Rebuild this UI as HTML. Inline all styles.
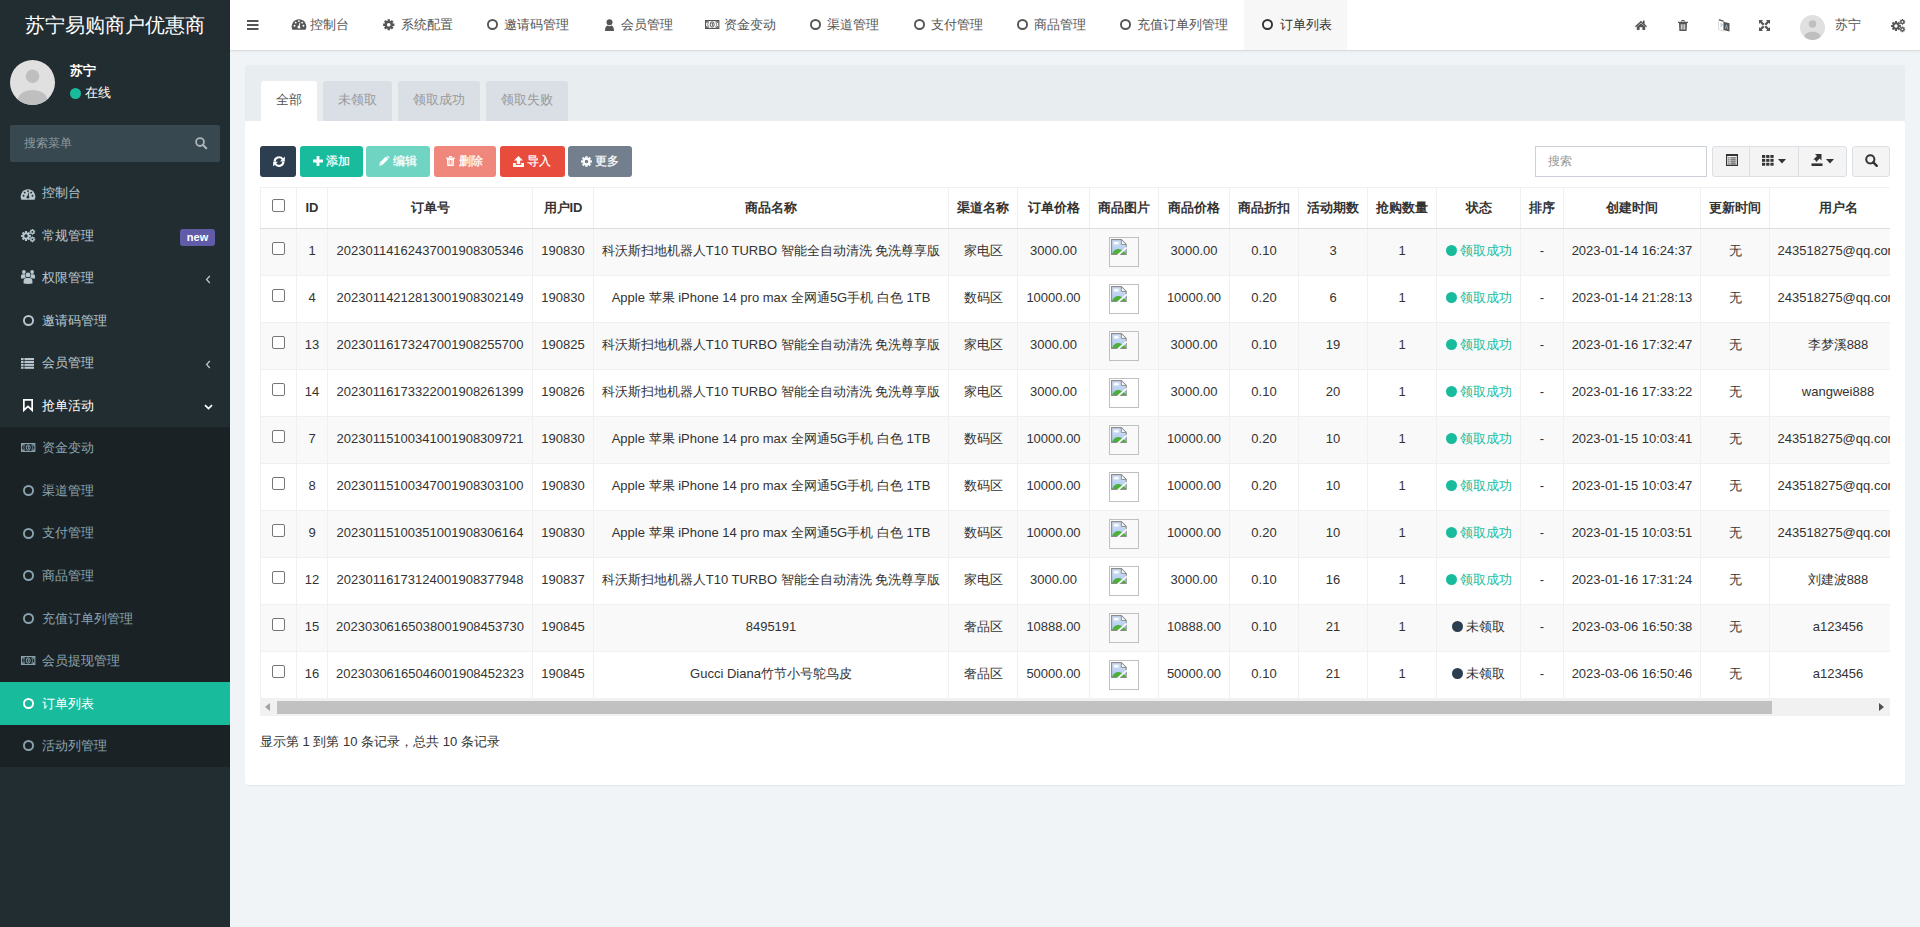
<!DOCTYPE html>
<html><head><meta charset="utf-8">
<style>
*{box-sizing:border-box;margin:0;padding:0}
html,body{width:1920px;height:927px;overflow:hidden}
body{font-family:"Liberation Sans",sans-serif;font-size:13px;color:#333;background:#f1f4f6;position:relative}
.abs{position:absolute}
svg{display:block;overflow:visible}
#side{position:absolute;left:0;top:0;width:230px;height:927px;background:#222d32}
#logo{position:absolute;left:0;top:0;width:230px;height:50px;color:#fff;font-size:20px;line-height:50px;text-align:center}
.avatar{position:absolute;left:10px;top:60px;width:45px;height:45px;border-radius:50%;background:#e0e0e0;overflow:hidden}
.uname{position:absolute;left:70px;top:62px;color:#fff;font-weight:bold;font-size:13px;line-height:18px}
.ustat{position:absolute;left:70px;top:85px;color:#fff;font-size:13px;line-height:16px}
.sform{position:absolute;left:10px;top:125px;width:210px;height:37px;background:#374850;border-radius:2px}
.sform span{position:absolute;left:14px;top:10.5px;color:#8c9ba3;line-height:15px;font-size:12px}
.menu{position:absolute;left:0;top:171.6px;width:230px}
.mi{position:relative;height:42.57px;color:#b8c7ce;line-height:15px}
.mi .t{position:absolute;left:42px;top:13.4px}
.sub{background:#1a2226}
.sub .mi{color:#8aa4af}
.mi.act{background:#18bc9c;color:#fff}
.mi.open{color:#fff}
.badge{position:absolute;left:180px;top:15px;height:17px;width:35px;border-radius:3px;background:#605ca8;color:#fff;font-weight:bold;font-size:11px;line-height:17px;text-align:center}
#hdr{position:absolute;left:230px;top:0;width:1690px;height:50px;background:#fff;box-shadow:0 1px 1px rgba(0,0,0,.07),0 2px 4px rgba(0,0,0,.03)}
.nv{position:absolute;top:17px;color:#555;line-height:15px;white-space:nowrap}
.panel{position:absolute;left:245px;top:65px;width:1660px;height:720px;background:#fff;border-radius:3px;box-shadow:0 1px 1px rgba(0,0,0,.05)}
.phead{position:absolute;left:0;top:0;width:1660px;height:56px;background:#e8edf0;border-radius:2px 2px 0 0}
.tab{position:absolute;top:16px;height:40px;background:#d9dfe5;color:#999;border-radius:3px 3px 0 0;line-height:15px;padding-top:10.5px;text-align:center}
.tab.on{background:#fff;color:#555}
.btn{position:absolute;top:81px;height:31px;border-radius:3px;color:#fff;font-size:12px;line-height:15px}
.btn .t{position:absolute;top:7.5px;-webkit-text-stroke:0.25px #fff}
.tblwrap{position:absolute;left:15px;top:122px;width:1630px;height:511px;overflow:hidden}
table{border-collapse:collapse;table-layout:fixed;position:absolute;left:0;top:0}
td,th{border:1px solid #f0f0f0;text-align:center;white-space:nowrap;overflow:hidden;font-size:13px;line-height:15px;padding:0}
th{height:41px;font-weight:bold;border-bottom:1px solid #dcdcdc}
td{height:47px;padding-bottom:4px}
th{padding-bottom:2px}
td .cb{position:relative;top:-3px}
th .cb{position:relative;top:-3px}
tr.s td{background:#f9f9f9}
.cb{display:inline-block;width:13px;height:13px;border:1px solid #767676;border-radius:2px;background:#fff;vertical-align:middle}
.img{display:inline-block;width:30px;height:30px;border:1px solid #c0c0c0;position:relative;vertical-align:middle;top:2px}
.ok{color:#18bc9c}
.dot{display:inline-block;width:11px;height:11px;border-radius:50%;vertical-align:-1px;margin-right:3px}
</style></head><body>

<div id="side">
<div id="logo">苏宁易购商户优惠商</div>
<div class="avatar"><svg width="45" height="45" viewBox="0 0 45 45"><circle cx="22.5" cy="16.3" r="6.8" fill="#bfbfbf"/><ellipse cx="22.5" cy="39" rx="14.5" ry="9" fill="#bfbfbf"/></svg></div>
<div class="uname">苏宁</div>
<div class="ustat"><span style="display:inline-block;width:11px;height:11px;border-radius:50%;background:#18bc9c;vertical-align:-2px;margin-right:4px"></span>在线</div>
<div class="sform"><span>搜索菜单</span><svg class="abs" style="left:185px;top:12px" width="12" height="12" viewBox="0 0 12 12"><circle cx="5.04" cy="5.04" r="3.96" fill="none" stroke="#a9b3b8" stroke-width="1.8"/><path d="M7.811999999999999 7.811999999999999 L11.2 11.2" stroke="#a9b3b8" stroke-width="2.2" stroke-linecap="round"/></svg></div>
<div class="menu">
<div class="mi"><svg class="abs" style="left:21px;top:17px" width="14" height="11" viewBox="0 0 14 11"><path fill="#b8c7ce" d="M0.4 10.7 A7.3 7.3 0 1 1 13.6 10.7 Z"/><circle cx="2.55" cy="6.7" r="0.95" fill="#222d32"/><circle cx="3.7" cy="3.6" r="0.95" fill="#222d32"/><circle cx="6.9" cy="2.1" r="0.95" fill="#222d32"/><circle cx="10.15" cy="3.6" r="0.95" fill="#222d32"/><circle cx="11.45" cy="6.7" r="0.95" fill="#222d32"/><path d="M6.3 8 L7.6 3.6 L8.3 3.8 L7.5 8.3Z" fill="#222d32"/><circle cx="6.9" cy="8.2" r="1.35" fill="#222d32"/></svg><span class="t">控制台</span></div>
<div class="mi"><svg class="abs" style="left:21px;top:15px" width="14" height="13" viewBox="0 0 14 13"><path fill="#b8c7ce" fill-rule="evenodd" d="M4.01 3.43 L3.93 2.12 L6.07 2.12 L5.99 3.43 L6.82 3.78 L7.70 2.79 L9.21 4.30 L8.22 5.18 L8.57 6.01 L9.88 5.93 L9.88 8.07 L8.57 7.99 L8.22 8.82 L9.21 9.70 L7.70 11.21 L6.82 10.22 L5.99 10.57 L6.07 11.88 L3.93 11.88 L4.01 10.57 L3.18 10.22 L2.30 11.21 L0.79 9.70 L1.78 8.82 L1.43 7.99 L0.12 8.07 L0.12 5.93 L1.43 6.01 L1.78 5.18 L0.79 4.30 L2.30 2.79 L3.18 3.78Z M3.30 7.00 a1.7 1.7 0 1 0 3.40 0 a1.7 1.7 0 1 0 -3.40 0Z"/><path fill="#b8c7ce" fill-rule="evenodd" d="M10.84 0.88 L10.78 0.07 L12.02 0.07 L11.96 0.88 L12.44 1.07 L12.96 0.46 L13.84 1.34 L13.23 1.86 L13.42 2.34 L14.23 2.28 L14.23 3.52 L13.42 3.46 L13.23 3.94 L13.84 4.46 L12.96 5.34 L12.44 4.73 L11.96 4.92 L12.02 5.73 L10.78 5.73 L10.84 4.92 L10.36 4.73 L9.84 5.34 L8.96 4.46 L9.57 3.94 L9.38 3.46 L8.57 3.52 L8.57 2.28 L9.38 2.34 L9.57 1.86 L8.96 1.34 L9.84 0.46 L10.36 1.07Z M10.50 2.90 a0.9 0.9 0 1 0 1.80 0 a0.9 0.9 0 1 0 -1.80 0Z"/><path fill="#b8c7ce" fill-rule="evenodd" d="M10.84 8.28 L10.78 7.47 L12.02 7.47 L11.96 8.28 L12.44 8.47 L12.96 7.86 L13.84 8.74 L13.23 9.26 L13.42 9.74 L14.23 9.68 L14.23 10.92 L13.42 10.86 L13.23 11.34 L13.84 11.86 L12.96 12.74 L12.44 12.13 L11.96 12.32 L12.02 13.13 L10.78 13.13 L10.84 12.32 L10.36 12.13 L9.84 12.74 L8.96 11.86 L9.57 11.34 L9.38 10.86 L8.57 10.92 L8.57 9.68 L9.38 9.74 L9.57 9.26 L8.96 8.74 L9.84 7.86 L10.36 8.47Z M10.50 10.30 a0.9 0.9 0 1 0 1.80 0 a0.9 0.9 0 1 0 -1.80 0Z"/></svg><span class="t">常规管理</span><div class="badge">new</div></div>
<div class="mi"><svg class="abs" style="left:21px;top:13.5px" width="14" height="14" viewBox="0 0 14 14"><circle cx="2.9" cy="2.0" r="1.9" fill="#b8c7ce"/><circle cx="11.1" cy="2.0" r="1.9" fill="#b8c7ce"/><path d="M0 8.6 L0 6 Q0 4.3 1.6 4.3 L4.2 4.3 Q5.6 4.3 5.6 6 L5.6 8.6Z" fill="#b8c7ce"/><path d="M14 8.6 L14 6 Q14 4.3 12.4 4.3 L9.8 4.3 Q8.4 4.3 8.4 6 L8.4 8.6Z" fill="#b8c7ce"/><circle cx="7" cy="4.9" r="2.9" fill="#222d32"/><circle cx="7" cy="4.9" r="2.4" fill="#b8c7ce"/><path d="M2.0 14 L2.0 11 Q2.0 7.4 5 7.4 L9 7.4 Q12 7.4 12 11 L12 14Z" fill="#222d32"/><path d="M2.6 13.6 L2.6 11 Q2.6 8.0 5.2 8.0 L8.8 8.0 Q11.4 8.0 11.4 11 L11.4 13.6 Q7 14.2 2.6 13.6Z" fill="#b8c7ce"/></svg><span class="t">权限管理</span><svg class="abs" style="left:205px;top:18px" width="6" height="9" viewBox="0 0 6 9"><path d="M4.8 1 L1.6 4.5 L4.8 8" fill="none" stroke="#b8c7ce" stroke-width="1.3"/></svg></div>
<div class="mi"><svg class="abs" style="left:22.5px;top:15.5px" width="11" height="11" viewBox="0 0 11 11"><circle cx="5.5" cy="5.5" r="4.55" fill="none" stroke="#b8c7ce" stroke-width="1.9"/></svg><span class="t">邀请码管理</span></div>
<div class="mi"><svg class="abs" style="left:21px;top:16px" width="13" height="11" viewBox="0 0 13 11"><rect x="0" y="0.0" width="2.6" height="2.1" fill="#b8c7ce"/><rect x="3.4" y="0.0" width="9.6" height="2.1" fill="#b8c7ce"/><rect x="0" y="2.9" width="2.6" height="2.1" fill="#b8c7ce"/><rect x="3.4" y="2.9" width="9.6" height="2.1" fill="#b8c7ce"/><rect x="0" y="5.8" width="2.6" height="2.1" fill="#b8c7ce"/><rect x="3.4" y="5.8" width="9.6" height="2.1" fill="#b8c7ce"/><rect x="0" y="8.7" width="2.6" height="2.1" fill="#b8c7ce"/><rect x="3.4" y="8.7" width="9.6" height="2.1" fill="#b8c7ce"/></svg><span class="t">会员管理</span><svg class="abs" style="left:205px;top:18px" width="6" height="9" viewBox="0 0 6 9"><path d="M4.8 1 L1.6 4.5 L4.8 8" fill="none" stroke="#b8c7ce" stroke-width="1.3"/></svg></div>
<div class="mi open"><svg class="abs" style="left:22.5px;top:14.5px" width="10" height="12" viewBox="0 0 10 12"><path d="M0.85 0.85 L9.15 0.85 L9.15 11.2 L5 7.4 L0.85 11.2Z" fill="none" stroke="#fff" stroke-width="1.7" stroke-linejoin="miter"/></svg><span class="t">抢单活动</span><svg class="abs" style="left:203.5px;top:20px" width="9" height="6" viewBox="0 0 9 6"><path d="M1 1.2 L4.5 4.6 L8 1.2" fill="none" stroke="#fff" stroke-width="1.7"/></svg></div>
<div class="sub">
<div class="mi"><svg class="abs" style="left:20.7px;top:15.8px" width="14.4" height="9" viewBox="0 0 14.4 9"><rect x="0" y="0" width="14.4" height="9" fill="#8aa4af"/><rect x="1.1" y="1.1" width="12.2" height="6.8" fill="#1a2226"/><path d="M1.1 1.1 L3.6 1.1 Q2.3 2.6 2.2 3.0 L1.1 3.0Z M1.1 7.9 L3.6 7.9 Q2.3 6.4 2.2 6.0 L1.1 6.0Z" fill="#8aa4af" opacity="0.8"/><path d="M13.3 1.1 L10.8 1.1 Q12.1 2.6 12.2 3.0 L13.3 3.0Z M13.3 7.9 L10.8 7.9 Q12.1 6.4 12.2 6.0 L13.3 6.0Z" fill="#8aa4af" opacity="0.8"/><path d="M3.6 1.3 Q1.9 4.5 3.6 7.7" fill="none" stroke="#8aa4af" stroke-width="0.9" opacity="0.8"/><path d="M10.8 1.3 Q12.5 4.5 10.8 7.7" fill="none" stroke="#8aa4af" stroke-width="0.9" opacity="0.8"/><ellipse cx="7.2" cy="4.5" rx="2.0" ry="2.7" fill="none" stroke="#8aa4af" stroke-width="1.0"/><path d="M6.6 3.3 L7.4 3.0 L7.4 6.2" fill="none" stroke="#8aa4af" stroke-width="0.9"/></svg><span class="t">资金变动</span></div>
<div class="mi"><svg class="abs" style="left:22.5px;top:15.5px" width="11" height="11" viewBox="0 0 11 11"><circle cx="5.5" cy="5.5" r="4.55" fill="none" stroke="#8aa4af" stroke-width="1.9"/></svg><span class="t">渠道管理</span></div>
<div class="mi"><svg class="abs" style="left:22.5px;top:15.5px" width="11" height="11" viewBox="0 0 11 11"><circle cx="5.5" cy="5.5" r="4.55" fill="none" stroke="#8aa4af" stroke-width="1.9"/></svg><span class="t">支付管理</span></div>
<div class="mi"><svg class="abs" style="left:22.5px;top:15.5px" width="11" height="11" viewBox="0 0 11 11"><circle cx="5.5" cy="5.5" r="4.55" fill="none" stroke="#8aa4af" stroke-width="1.9"/></svg><span class="t">商品管理</span></div>
<div class="mi"><svg class="abs" style="left:22.5px;top:15.5px" width="11" height="11" viewBox="0 0 11 11"><circle cx="5.5" cy="5.5" r="4.55" fill="none" stroke="#8aa4af" stroke-width="1.9"/></svg><span class="t">充值订单列管理</span></div>
<div class="mi"><svg class="abs" style="left:20.7px;top:15.8px" width="14.4" height="9" viewBox="0 0 14.4 9"><rect x="0" y="0" width="14.4" height="9" fill="#8aa4af"/><rect x="1.1" y="1.1" width="12.2" height="6.8" fill="#1a2226"/><path d="M1.1 1.1 L3.6 1.1 Q2.3 2.6 2.2 3.0 L1.1 3.0Z M1.1 7.9 L3.6 7.9 Q2.3 6.4 2.2 6.0 L1.1 6.0Z" fill="#8aa4af" opacity="0.8"/><path d="M13.3 1.1 L10.8 1.1 Q12.1 2.6 12.2 3.0 L13.3 3.0Z M13.3 7.9 L10.8 7.9 Q12.1 6.4 12.2 6.0 L13.3 6.0Z" fill="#8aa4af" opacity="0.8"/><path d="M3.6 1.3 Q1.9 4.5 3.6 7.7" fill="none" stroke="#8aa4af" stroke-width="0.9" opacity="0.8"/><path d="M10.8 1.3 Q12.5 4.5 10.8 7.7" fill="none" stroke="#8aa4af" stroke-width="0.9" opacity="0.8"/><ellipse cx="7.2" cy="4.5" rx="2.0" ry="2.7" fill="none" stroke="#8aa4af" stroke-width="1.0"/><path d="M6.6 3.3 L7.4 3.0 L7.4 6.2" fill="none" stroke="#8aa4af" stroke-width="0.9"/></svg><span class="t">会员提现管理</span></div>
<div class="mi act"><svg class="abs" style="left:22.5px;top:15.5px" width="11" height="11" viewBox="0 0 11 11"><circle cx="5.5" cy="5.5" r="4.55" fill="none" stroke="#fff" stroke-width="1.9"/></svg><span class="t">订单列表</span></div>
<div class="mi"><svg class="abs" style="left:22.5px;top:15.5px" width="11" height="11" viewBox="0 0 11 11"><circle cx="5.5" cy="5.5" r="4.55" fill="none" stroke="#8aa4af" stroke-width="1.9"/></svg><span class="t">活动列管理</span></div>
</div></div></div>
<div id="hdr">
<div class="abs" style="left:1014px;top:0;width:103px;height:50px;background:#f7f7f7"></div>
<svg class="abs" style="left:17px;top:20px" width="12" height="10" viewBox="0 0 12 10"><rect x="0" y="0" width="11.5" height="2" fill="#555"/><rect x="0" y="4" width="11.5" height="2" fill="#555"/><rect x="0" y="8" width="11.5" height="2" fill="#555"/></svg>
<svg class="abs" style="left:62px;top:19px" width="14" height="11" viewBox="0 0 14 11"><path fill="#555" d="M0.4 10.7 A7.3 7.3 0 1 1 13.6 10.7 Z"/><circle cx="2.55" cy="6.7" r="0.95" fill="#fff"/><circle cx="3.7" cy="3.6" r="0.95" fill="#fff"/><circle cx="6.9" cy="2.1" r="0.95" fill="#fff"/><circle cx="10.15" cy="3.6" r="0.95" fill="#fff"/><circle cx="11.45" cy="6.7" r="0.95" fill="#fff"/><path d="M6.3 8 L7.6 3.6 L8.3 3.8 L7.5 8.3Z" fill="#fff"/><circle cx="6.9" cy="8.2" r="1.35" fill="#fff"/></svg>
<div class="nv" style="left:80px;color:#555">控制台</div>
<svg class="abs" style="left:153px;top:18.5px" width="11.5" height="11.5" viewBox="0 0 11.5 11.5"><path fill="#555" fill-rule="evenodd" d="M4.62 1.65 L4.52 0.13 L6.98 0.13 L6.88 1.65 L7.85 2.05 L8.85 0.91 L10.59 2.65 L9.45 3.65 L9.85 4.62 L11.37 4.52 L11.37 6.98 L9.85 6.88 L9.45 7.85 L10.59 8.85 L8.85 10.59 L7.85 9.45 L6.88 9.85 L6.98 11.37 L4.52 11.37 L4.62 9.85 L3.65 9.45 L2.65 10.59 L0.91 8.85 L2.05 7.85 L1.65 6.88 L0.13 6.98 L0.13 4.52 L1.65 4.62 L2.05 3.65 L0.91 2.65 L2.65 0.91 L3.65 2.05Z M3.91 5.75 a1.84 1.84 0 1 0 3.68 0 a1.84 1.84 0 1 0 -3.68 0Z"/></svg>
<div class="nv" style="left:171px;color:#555">系统配置</div>
<svg class="abs" style="left:256.5px;top:18.5px" width="11" height="11" viewBox="0 0 11 11"><circle cx="5.5" cy="5.5" r="4.55" fill="none" stroke="#555" stroke-width="1.9"/></svg>
<div class="nv" style="left:274px;color:#555">邀请码管理</div>
<svg class="abs" style="left:374.5px;top:18.5px" width="9" height="12" viewBox="0 0 9 12"><circle cx="4.5" cy="3.2" r="3" fill="#555"/><path d="M0 12 C0 8.5 1.2 6.8 2.6 6.6 Q4.5 7.8 6.4 6.6 C7.8 6.8 9 8.5 9 12Z" fill="#555"/></svg>
<div class="nv" style="left:391px;color:#555">会员管理</div>
<svg class="abs" style="left:475px;top:19.5px" width="14.4" height="9" viewBox="0 0 14.4 9"><rect x="0" y="0" width="14.4" height="9" fill="#555"/><rect x="1.1" y="1.1" width="12.2" height="6.8" fill="#fff"/><path d="M1.1 1.1 L3.6 1.1 Q2.3 2.6 2.2 3.0 L1.1 3.0Z M1.1 7.9 L3.6 7.9 Q2.3 6.4 2.2 6.0 L1.1 6.0Z" fill="#555" opacity="0.8"/><path d="M13.3 1.1 L10.8 1.1 Q12.1 2.6 12.2 3.0 L13.3 3.0Z M13.3 7.9 L10.8 7.9 Q12.1 6.4 12.2 6.0 L13.3 6.0Z" fill="#555" opacity="0.8"/><path d="M3.6 1.3 Q1.9 4.5 3.6 7.7" fill="none" stroke="#555" stroke-width="0.9" opacity="0.8"/><path d="M10.8 1.3 Q12.5 4.5 10.8 7.7" fill="none" stroke="#555" stroke-width="0.9" opacity="0.8"/><ellipse cx="7.2" cy="4.5" rx="2.0" ry="2.7" fill="none" stroke="#555" stroke-width="1.0"/><path d="M6.6 3.3 L7.4 3.0 L7.4 6.2" fill="none" stroke="#555" stroke-width="0.9"/></svg>
<div class="nv" style="left:494px;color:#555">资金变动</div>
<svg class="abs" style="left:579.5px;top:18.5px" width="11" height="11" viewBox="0 0 11 11"><circle cx="5.5" cy="5.5" r="4.55" fill="none" stroke="#555" stroke-width="1.9"/></svg>
<div class="nv" style="left:597px;color:#555">渠道管理</div>
<svg class="abs" style="left:683.5px;top:18.5px" width="11" height="11" viewBox="0 0 11 11"><circle cx="5.5" cy="5.5" r="4.55" fill="none" stroke="#555" stroke-width="1.9"/></svg>
<div class="nv" style="left:701px;color:#555">支付管理</div>
<svg class="abs" style="left:786.5px;top:18.5px" width="11" height="11" viewBox="0 0 11 11"><circle cx="5.5" cy="5.5" r="4.55" fill="none" stroke="#555" stroke-width="1.9"/></svg>
<div class="nv" style="left:804px;color:#555">商品管理</div>
<svg class="abs" style="left:889.5px;top:18.5px" width="11" height="11" viewBox="0 0 11 11"><circle cx="5.5" cy="5.5" r="4.55" fill="none" stroke="#555" stroke-width="1.9"/></svg>
<div class="nv" style="left:907px;color:#555">充值订单列管理</div>
<svg class="abs" style="left:1032.0px;top:18.5px" width="11" height="11" viewBox="0 0 11 11"><circle cx="5.5" cy="5.5" r="4.55" fill="none" stroke="#333" stroke-width="1.9"/></svg>
<div class="nv" style="left:1049.5px;color:#333">订单列表</div>
<svg class="abs" style="left:1405px;top:20px" width="12" height="10" viewBox="0 0 12 10"><path d="M6 0.8 L0 6.2 L1 7.2 L6 2.8 L11 7.2 L12 6.2 L9.6 4 L9.6 0.6 L8 0.6 L8 2.6Z" fill="#555"/><path d="M1.8 6.8 L6 3.2 L10.2 6.8 L10.2 10 L7.4 10 L7.4 7.2 L4.6 7.2 L4.6 10 L1.8 10Z" fill="#555"/></svg>
<svg class="abs" style="left:1448px;top:20px" width="10" height="11" viewBox="0 0 10 11"><path d="M0 1.8 L10 1.8 L10 3 L0 3Z" fill="#555"/><path d="M3.2 1.8 L3.6 0 L6.4 0 L6.8 1.8 L5.9 1.8 L5.7 0.9 L4.3 0.9 L4.1 1.8Z" fill="#555"/><path d="M1 3 L9 3 L8.6 11 L1.4 11Z" fill="#555"/><rect x="2.8" y="4.2" width="0.9" height="5.4" fill="#fff"/><rect x="4.55" y="4.2" width="0.9" height="5.4" fill="#fff"/><rect x="6.3" y="4.2" width="0.9" height="5.4" fill="#fff"/></svg>
<svg class="abs" style="left:1487.5px;top:19px" width="12" height="13" viewBox="0 0 12 13"><path d="M0.5 1.5 L6 3 L6 12 L0.5 10.5Z" fill="none" stroke="#cfd3d8" stroke-width="0.8"/><path d="M2 5 L4.5 5 M3.2 4 L3.2 8 M2 8 Q4 7 4.8 5" stroke="#b9c2cc" stroke-width="0.7" fill="none"/><path d="M5.5 2.8 L11.5 4.2 L11.5 12.6 L5.5 11Z" fill="#555"/><path d="M1 0.6 L5.8 2.2" stroke="#555" stroke-width="1.2"/><path d="M7.4 9.8 L8.5 5.8 L9.6 10.2" stroke="#9fb6cc" stroke-width="0.9" fill="none"/></svg>
<svg class="abs" style="left:1529px;top:20px" width="11" height="11" viewBox="0 0 11 11"><path d="M0 0 L4 0 L2.8 1.2 L5.5 3.9 L3.9 5.5 L1.2 2.8 L0 4Z" fill="#555"/><path d="M11 0 L7 0 L8.2 1.2 L5.5 3.9 L7.1 5.5 L9.8 2.8 L11 4Z" fill="#555"/><path d="M0 11 L4 11 L2.8 9.8 L5.5 7.1 L3.9 5.5 L1.2 8.2 L0 7Z" fill="#555"/><path d="M11 11 L7 11 L8.2 9.8 L5.5 7.1 L7.1 5.5 L9.8 8.2 L11 7Z" fill="#555"/></svg>
<div class="abs" style="left:1570px;top:15px;width:25px;height:25px;border-radius:50%;background:#e0e0e0;overflow:hidden"><svg width="25" height="25" viewBox="0 0 45 45"><circle cx="22.5" cy="16.3" r="6.8" fill="#bfbfbf"/><ellipse cx="22.5" cy="39" rx="14.5" ry="9" fill="#bfbfbf"/></svg></div>
<div class="nv" style="left:1605px">苏宁</div>
<svg class="abs" style="left:1661px;top:19px" width="14" height="13" viewBox="0 0 14 13"><path fill="#555" fill-rule="evenodd" d="M4.01 3.43 L3.93 2.12 L6.07 2.12 L5.99 3.43 L6.82 3.78 L7.70 2.79 L9.21 4.30 L8.22 5.18 L8.57 6.01 L9.88 5.93 L9.88 8.07 L8.57 7.99 L8.22 8.82 L9.21 9.70 L7.70 11.21 L6.82 10.22 L5.99 10.57 L6.07 11.88 L3.93 11.88 L4.01 10.57 L3.18 10.22 L2.30 11.21 L0.79 9.70 L1.78 8.82 L1.43 7.99 L0.12 8.07 L0.12 5.93 L1.43 6.01 L1.78 5.18 L0.79 4.30 L2.30 2.79 L3.18 3.78Z M3.30 7.00 a1.7 1.7 0 1 0 3.40 0 a1.7 1.7 0 1 0 -3.40 0Z"/><path fill="#555" fill-rule="evenodd" d="M10.84 0.88 L10.78 0.07 L12.02 0.07 L11.96 0.88 L12.44 1.07 L12.96 0.46 L13.84 1.34 L13.23 1.86 L13.42 2.34 L14.23 2.28 L14.23 3.52 L13.42 3.46 L13.23 3.94 L13.84 4.46 L12.96 5.34 L12.44 4.73 L11.96 4.92 L12.02 5.73 L10.78 5.73 L10.84 4.92 L10.36 4.73 L9.84 5.34 L8.96 4.46 L9.57 3.94 L9.38 3.46 L8.57 3.52 L8.57 2.28 L9.38 2.34 L9.57 1.86 L8.96 1.34 L9.84 0.46 L10.36 1.07Z M10.50 2.90 a0.9 0.9 0 1 0 1.80 0 a0.9 0.9 0 1 0 -1.80 0Z"/><path fill="#555" fill-rule="evenodd" d="M10.84 8.28 L10.78 7.47 L12.02 7.47 L11.96 8.28 L12.44 8.47 L12.96 7.86 L13.84 8.74 L13.23 9.26 L13.42 9.74 L14.23 9.68 L14.23 10.92 L13.42 10.86 L13.23 11.34 L13.84 11.86 L12.96 12.74 L12.44 12.13 L11.96 12.32 L12.02 13.13 L10.78 13.13 L10.84 12.32 L10.36 12.13 L9.84 12.74 L8.96 11.86 L9.57 11.34 L9.38 10.86 L8.57 10.92 L8.57 9.68 L9.38 9.74 L9.57 9.26 L8.96 8.74 L9.84 7.86 L10.36 8.47Z M10.50 10.30 a0.9 0.9 0 1 0 1.80 0 a0.9 0.9 0 1 0 -1.80 0Z"/></svg>
</div>
<div class="panel">
<div class="phead">
<div class="tab on" style="left:16px;width:56px">全部</div>
<div class="tab" style="left:78px;width:69px">未领取</div>
<div class="tab" style="left:153px;width:82px">领取成功</div>
<div class="tab" style="left:241px;width:82px">领取失败</div>
</div>
<div class="btn" style="left:15px;width:36px;background:#2c3e50"><svg class="abs" style="left:12.5px;top:10px" width="12" height="11" viewBox="0 0 12 11"><path d="M1.6 5.6 A4.4 4.4 0 0 1 9.6 3.2" fill="none" stroke="#fff" stroke-width="2.1"/><path d="M11.8 0.6 L11.8 5.4 L7.0 5.4Z" fill="#fff"/><path d="M10.4 5.6 A4.4 4.4 0 0 1 2.4 8.0" fill="none" stroke="#fff" stroke-width="2.1"/><path d="M0.2 10.6 L0.2 5.8 L5.0 5.8Z" fill="#fff"/></svg></div>
<div class="btn" style="left:55px;width:63px;background:#18bc9c"><svg class="abs" style="left:13px;top:10px" width="10" height="10" viewBox="0 0 10 10"><path d="M3.6 0 h2.8 v3.6 h3.6 v2.8 h-3.6 v3.6 h-2.8 v-3.6 h-3.6 v-2.8 h3.6Z" fill="#fff"/></svg><span class="t" style="left:26px">添加</span></div>
<div class="btn" style="left:121px;width:64px;background:#6fd4c1"><svg class="abs" style="left:12.5px;top:10px" width="10" height="10" viewBox="0 0 10 10"><path d="M0.2 9.8 L0.9 6.6 L6.9 0.6 L9.4 3.1 L3.4 9.1Z" fill="#fff"/><path d="M7.6 0 L8.4 -0.6 L10.6 1.6 L10.0 2.4Z" fill="#fff"/><path d="M1.3 7.2 L2.8 8.7" stroke="#6fd4c1" stroke-width="0.6"/></svg><span class="t" style="left:27px">编辑</span></div>
<div class="btn" style="left:189px;width:62px;background:#f0877c"><svg class="abs" style="left:12px;top:9.5px" width="9" height="10" viewBox="0 0 9 10"><path d="M0 1.6 L9 1.6 L9 2.8 L0 2.8Z" fill="#fff"/><path d="M2.8 1.6 L3.2 0 L5.8 0 L6.2 1.6Z" fill="#fff"/><path d="M0.9 2.8 L8.1 2.8 L7.7 10 L1.3 10Z" fill="#fff"/><rect x="2.6" y="3.9" width="0.8" height="4.8" fill="#f0877c"/><rect x="4.1" y="3.9" width="0.8" height="4.8" fill="#f0877c"/><rect x="5.6" y="3.9" width="0.8" height="4.8" fill="#f0877c"/></svg><span class="t" style="left:25px">删除</span></div>
<div class="btn" style="left:255px;width:65px;background:#e74c3c"><svg class="abs" style="left:12.5px;top:9.5px" width="11" height="11" viewBox="0 0 11 11"><path d="M5.5 0 L10 4.5 L7.2 4.5 L7.2 8 L3.8 8 L3.8 4.5 L1 4.5Z" fill="#fff"/><path d="M0 7 L2.8 7 L2.8 9 L8.2 9 L8.2 7 L11 7 L11 11 L0 11Z" fill="#fff"/></svg><span class="t" style="left:27px">导入</span></div>
<div class="btn" style="left:323px;width:64px;background:#737f8c"><svg class="abs" style="left:12.5px;top:9.5px" width="11" height="11" viewBox="0 0 11 11"><path fill="#fff" fill-rule="evenodd" d="M4.41 1.58 L4.32 0.13 L6.68 0.13 L6.59 1.58 L7.51 1.96 L8.47 0.87 L10.13 2.53 L9.04 3.49 L9.42 4.41 L10.87 4.32 L10.87 6.68 L9.42 6.59 L9.04 7.51 L10.13 8.47 L8.47 10.13 L7.51 9.04 L6.59 9.42 L6.68 10.87 L4.32 10.87 L4.41 9.42 L3.49 9.04 L2.53 10.13 L0.87 8.47 L1.96 7.51 L1.58 6.59 L0.13 6.68 L0.13 4.32 L1.58 4.41 L1.96 3.49 L0.87 2.53 L2.53 0.87 L3.49 1.96Z M3.74 5.50 a1.76 1.76 0 1 0 3.52 0 a1.76 1.76 0 1 0 -3.52 0Z"/></svg><span class="t" style="left:26.5px">更多</span></div>
<div class="abs" style="left:1290px;top:81px;width:172px;height:31px;border:1px solid #ccd1d9;background:#fff"><span class="abs" style="left:12px;top:7px;color:#999;line-height:15px;font-size:12px">搜索</span></div>
<div class="abs" style="left:1467px;top:81px;width:135px;height:31px;border:1px solid #dcdfe3;background:#f4f4f4;border-radius:3px"></div>
<div class="abs" style="left:1504px;top:82px;width:1px;height:29px;background:#dcdfe3"></div>
<div class="abs" style="left:1553px;top:82px;width:1px;height:29px;background:#dcdfe3"></div>
<div class="abs" style="left:1607px;top:81px;width:38px;height:31px;border:1px solid #dcdfe3;background:#f4f4f4;border-radius:3px"></div>
<svg class="abs" style="left:1481px;top:89px" width="12" height="12" viewBox="0 0 12 12"><rect x="0.6" y="0.6" width="10.8" height="10.8" fill="none" stroke="#333" stroke-width="1.2"/><rect x="0" y="0" width="12" height="2" fill="#333"/><rect x="2.2" y="3.4" width="1.4" height="1" fill="#333"/><rect x="4.4" y="3.4" width="5.4" height="1" fill="#333"/><rect x="2.2" y="5.4" width="1.4" height="1" fill="#333"/><rect x="4.4" y="5.4" width="5.4" height="1" fill="#333"/><rect x="2.2" y="7.4" width="1.4" height="1" fill="#333"/><rect x="4.4" y="7.4" width="5.4" height="1" fill="#333"/><rect x="2.2" y="9.4" width="1.4" height="1" fill="#333"/><rect x="4.4" y="9.4" width="5.4" height="1" fill="#333"/></svg>
<svg class="abs" style="left:1517px;top:90px" width="12" height="11" viewBox="0 0 12 11"><rect x="0.0" y="0.0" width="3.2" height="2.9" fill="#333"/><rect x="4.2" y="0.0" width="3.2" height="2.9" fill="#333"/><rect x="8.4" y="0.0" width="3.2" height="2.9" fill="#333"/><rect x="0.0" y="3.9" width="3.2" height="2.9" fill="#333"/><rect x="4.2" y="3.9" width="3.2" height="2.9" fill="#333"/><rect x="8.4" y="3.9" width="3.2" height="2.9" fill="#333"/><rect x="0.0" y="7.8" width="3.2" height="2.9" fill="#333"/><rect x="4.2" y="7.8" width="3.2" height="2.9" fill="#333"/><rect x="8.4" y="7.8" width="3.2" height="2.9" fill="#333"/></svg>
<svg class="abs" style="left:1533px;top:94px" width="8" height="5" viewBox="0 0 8 5"><path d="M0 0 L8 0 L4 4.5Z" fill="#333"/></svg>
<svg class="abs" style="left:1565.5px;top:89px" width="12" height="12" viewBox="0 0 12 12"><rect x="0.5" y="9.4" width="11" height="2.6" fill="#333"/><path d="M4 0 L10.5 0 L10.5 6.5 L8.6 4.6 L5 8.2 L2.4 5.6 L6 2 Z" fill="#333"/><path d="M2 6.4 L3.2 5.2 L5.2 7.2 L4.2 8.4Z" fill="#f4f4f4"/></svg>
<svg class="abs" style="left:1581px;top:94px" width="8" height="5" viewBox="0 0 8 5"><path d="M0 0 L8 0 L4 4.5Z" fill="#333"/></svg>
<svg class="abs" style="left:1620px;top:89px" width="13" height="13" viewBox="0 0 13 13"><circle cx="5.3" cy="5.3" r="4.1" fill="none" stroke="#333" stroke-width="2"/><path d="M8.3 8.3 L11.8 11.8" stroke="#333" stroke-width="2.4" stroke-linecap="round"/></svg>
</div>
<div class="tblwrap" style="left:260px;top:187px">
<table style="width:1646px"><colgroup><col style="width:36px"><col style="width:31px"><col style="width:205px"><col style="width:61px"><col style="width:355px"><col style="width:69px"><col style="width:72px"><col style="width:69px"><col style="width:71px"><col style="width:69px"><col style="width:69px"><col style="width:69px"><col style="width:84px"><col style="width:43px"><col style="width:137px"><col style="width:69px"><col style="width:137px"></colgroup>
<tr><th><span class=cb></span></th><th>ID</th><th>订单号</th><th>用户ID</th><th>商品名称</th><th>渠道名称</th><th>订单价格</th><th>商品图片</th><th>商品价格</th><th>商品折扣</th><th>活动期数</th><th>抢购数量</th><th>状态</th><th>排序</th><th>创建时间</th><th>更新时间</th><th>用户名</th></tr>
<tr class="s"><td><span class="cb"></span></td><td>1</td><td>20230114162437001908305346</td><td>190830</td><td>科沃斯扫地机器人T10 TURBO 智能全自动清洗 免洗尊享版</td><td>家电区</td><td>3000.00</td><td><span class="img"><svg class="abs" style="left:1px;top:1px" width="16" height="16" viewBox="0 0 16 16"><defs><linearGradient id="sky" x1="0" y1="0" x2="0" y2="1"><stop offset="0" stop-color="#d3e2f8"/><stop offset="1" stop-color="#aac6ee"/></linearGradient></defs><path d="M0.6 0.6 L10.3 0.6 L15.2 5.4 L15.2 15.4 L0.6 15.4Z" fill="url(#sky)" stroke="#8c8c8c" stroke-width="1.1"/><path d="M10.3 0.6 L10.3 5.4 L15.2 5.4Z" fill="#fff" stroke="#8c8c8c" stroke-width="1"/><ellipse cx="5.3" cy="4.4" rx="2.6" ry="1.1" fill="#fff"/><path d="M3.6 4 Q5.3 1.8 7 4Z" fill="#fff"/><path d="M1.1 15 Q3.5 9.5 8 10 Q12 10.6 14.7 14 L14.7 15Z" fill="#4caf39"/><path d="M6.8 16.2 L15.8 8.4" stroke="#f9f9f9" stroke-width="1.8"/></svg></span></td><td>3000.00</td><td>0.10</td><td>3</td><td>1</td><td><span class="ok"><span class="dot" style="background:#18bc9c"></span>领取成功</span></td><td>-</td><td>2023-01-14 16:24:37</td><td>无</td><td>243518275@qq.com</td></tr>
<tr><td><span class="cb"></span></td><td>4</td><td>20230114212813001908302149</td><td>190830</td><td>Apple 苹果 iPhone 14 pro max 全网通5G手机 白色 1TB</td><td>数码区</td><td>10000.00</td><td><span class="img"><svg class="abs" style="left:1px;top:1px" width="16" height="16" viewBox="0 0 16 16"><defs><linearGradient id="sky" x1="0" y1="0" x2="0" y2="1"><stop offset="0" stop-color="#d3e2f8"/><stop offset="1" stop-color="#aac6ee"/></linearGradient></defs><path d="M0.6 0.6 L10.3 0.6 L15.2 5.4 L15.2 15.4 L0.6 15.4Z" fill="url(#sky)" stroke="#8c8c8c" stroke-width="1.1"/><path d="M10.3 0.6 L10.3 5.4 L15.2 5.4Z" fill="#fff" stroke="#8c8c8c" stroke-width="1"/><ellipse cx="5.3" cy="4.4" rx="2.6" ry="1.1" fill="#fff"/><path d="M3.6 4 Q5.3 1.8 7 4Z" fill="#fff"/><path d="M1.1 15 Q3.5 9.5 8 10 Q12 10.6 14.7 14 L14.7 15Z" fill="#4caf39"/><path d="M6.8 16.2 L15.8 8.4" stroke="#f9f9f9" stroke-width="1.8"/></svg></span></td><td>10000.00</td><td>0.20</td><td>6</td><td>1</td><td><span class="ok"><span class="dot" style="background:#18bc9c"></span>领取成功</span></td><td>-</td><td>2023-01-14 21:28:13</td><td>无</td><td>243518275@qq.com</td></tr>
<tr class="s"><td><span class="cb"></span></td><td>13</td><td>20230116173247001908255700</td><td>190825</td><td>科沃斯扫地机器人T10 TURBO 智能全自动清洗 免洗尊享版</td><td>家电区</td><td>3000.00</td><td><span class="img"><svg class="abs" style="left:1px;top:1px" width="16" height="16" viewBox="0 0 16 16"><defs><linearGradient id="sky" x1="0" y1="0" x2="0" y2="1"><stop offset="0" stop-color="#d3e2f8"/><stop offset="1" stop-color="#aac6ee"/></linearGradient></defs><path d="M0.6 0.6 L10.3 0.6 L15.2 5.4 L15.2 15.4 L0.6 15.4Z" fill="url(#sky)" stroke="#8c8c8c" stroke-width="1.1"/><path d="M10.3 0.6 L10.3 5.4 L15.2 5.4Z" fill="#fff" stroke="#8c8c8c" stroke-width="1"/><ellipse cx="5.3" cy="4.4" rx="2.6" ry="1.1" fill="#fff"/><path d="M3.6 4 Q5.3 1.8 7 4Z" fill="#fff"/><path d="M1.1 15 Q3.5 9.5 8 10 Q12 10.6 14.7 14 L14.7 15Z" fill="#4caf39"/><path d="M6.8 16.2 L15.8 8.4" stroke="#f9f9f9" stroke-width="1.8"/></svg></span></td><td>3000.00</td><td>0.10</td><td>19</td><td>1</td><td><span class="ok"><span class="dot" style="background:#18bc9c"></span>领取成功</span></td><td>-</td><td>2023-01-16 17:32:47</td><td>无</td><td>李梦溪888</td></tr>
<tr><td><span class="cb"></span></td><td>14</td><td>20230116173322001908261399</td><td>190826</td><td>科沃斯扫地机器人T10 TURBO 智能全自动清洗 免洗尊享版</td><td>家电区</td><td>3000.00</td><td><span class="img"><svg class="abs" style="left:1px;top:1px" width="16" height="16" viewBox="0 0 16 16"><defs><linearGradient id="sky" x1="0" y1="0" x2="0" y2="1"><stop offset="0" stop-color="#d3e2f8"/><stop offset="1" stop-color="#aac6ee"/></linearGradient></defs><path d="M0.6 0.6 L10.3 0.6 L15.2 5.4 L15.2 15.4 L0.6 15.4Z" fill="url(#sky)" stroke="#8c8c8c" stroke-width="1.1"/><path d="M10.3 0.6 L10.3 5.4 L15.2 5.4Z" fill="#fff" stroke="#8c8c8c" stroke-width="1"/><ellipse cx="5.3" cy="4.4" rx="2.6" ry="1.1" fill="#fff"/><path d="M3.6 4 Q5.3 1.8 7 4Z" fill="#fff"/><path d="M1.1 15 Q3.5 9.5 8 10 Q12 10.6 14.7 14 L14.7 15Z" fill="#4caf39"/><path d="M6.8 16.2 L15.8 8.4" stroke="#f9f9f9" stroke-width="1.8"/></svg></span></td><td>3000.00</td><td>0.10</td><td>20</td><td>1</td><td><span class="ok"><span class="dot" style="background:#18bc9c"></span>领取成功</span></td><td>-</td><td>2023-01-16 17:33:22</td><td>无</td><td>wangwei888</td></tr>
<tr class="s"><td><span class="cb"></span></td><td>7</td><td>20230115100341001908309721</td><td>190830</td><td>Apple 苹果 iPhone 14 pro max 全网通5G手机 白色 1TB</td><td>数码区</td><td>10000.00</td><td><span class="img"><svg class="abs" style="left:1px;top:1px" width="16" height="16" viewBox="0 0 16 16"><defs><linearGradient id="sky" x1="0" y1="0" x2="0" y2="1"><stop offset="0" stop-color="#d3e2f8"/><stop offset="1" stop-color="#aac6ee"/></linearGradient></defs><path d="M0.6 0.6 L10.3 0.6 L15.2 5.4 L15.2 15.4 L0.6 15.4Z" fill="url(#sky)" stroke="#8c8c8c" stroke-width="1.1"/><path d="M10.3 0.6 L10.3 5.4 L15.2 5.4Z" fill="#fff" stroke="#8c8c8c" stroke-width="1"/><ellipse cx="5.3" cy="4.4" rx="2.6" ry="1.1" fill="#fff"/><path d="M3.6 4 Q5.3 1.8 7 4Z" fill="#fff"/><path d="M1.1 15 Q3.5 9.5 8 10 Q12 10.6 14.7 14 L14.7 15Z" fill="#4caf39"/><path d="M6.8 16.2 L15.8 8.4" stroke="#f9f9f9" stroke-width="1.8"/></svg></span></td><td>10000.00</td><td>0.20</td><td>10</td><td>1</td><td><span class="ok"><span class="dot" style="background:#18bc9c"></span>领取成功</span></td><td>-</td><td>2023-01-15 10:03:41</td><td>无</td><td>243518275@qq.com</td></tr>
<tr><td><span class="cb"></span></td><td>8</td><td>20230115100347001908303100</td><td>190830</td><td>Apple 苹果 iPhone 14 pro max 全网通5G手机 白色 1TB</td><td>数码区</td><td>10000.00</td><td><span class="img"><svg class="abs" style="left:1px;top:1px" width="16" height="16" viewBox="0 0 16 16"><defs><linearGradient id="sky" x1="0" y1="0" x2="0" y2="1"><stop offset="0" stop-color="#d3e2f8"/><stop offset="1" stop-color="#aac6ee"/></linearGradient></defs><path d="M0.6 0.6 L10.3 0.6 L15.2 5.4 L15.2 15.4 L0.6 15.4Z" fill="url(#sky)" stroke="#8c8c8c" stroke-width="1.1"/><path d="M10.3 0.6 L10.3 5.4 L15.2 5.4Z" fill="#fff" stroke="#8c8c8c" stroke-width="1"/><ellipse cx="5.3" cy="4.4" rx="2.6" ry="1.1" fill="#fff"/><path d="M3.6 4 Q5.3 1.8 7 4Z" fill="#fff"/><path d="M1.1 15 Q3.5 9.5 8 10 Q12 10.6 14.7 14 L14.7 15Z" fill="#4caf39"/><path d="M6.8 16.2 L15.8 8.4" stroke="#f9f9f9" stroke-width="1.8"/></svg></span></td><td>10000.00</td><td>0.20</td><td>10</td><td>1</td><td><span class="ok"><span class="dot" style="background:#18bc9c"></span>领取成功</span></td><td>-</td><td>2023-01-15 10:03:47</td><td>无</td><td>243518275@qq.com</td></tr>
<tr class="s"><td><span class="cb"></span></td><td>9</td><td>20230115100351001908306164</td><td>190830</td><td>Apple 苹果 iPhone 14 pro max 全网通5G手机 白色 1TB</td><td>数码区</td><td>10000.00</td><td><span class="img"><svg class="abs" style="left:1px;top:1px" width="16" height="16" viewBox="0 0 16 16"><defs><linearGradient id="sky" x1="0" y1="0" x2="0" y2="1"><stop offset="0" stop-color="#d3e2f8"/><stop offset="1" stop-color="#aac6ee"/></linearGradient></defs><path d="M0.6 0.6 L10.3 0.6 L15.2 5.4 L15.2 15.4 L0.6 15.4Z" fill="url(#sky)" stroke="#8c8c8c" stroke-width="1.1"/><path d="M10.3 0.6 L10.3 5.4 L15.2 5.4Z" fill="#fff" stroke="#8c8c8c" stroke-width="1"/><ellipse cx="5.3" cy="4.4" rx="2.6" ry="1.1" fill="#fff"/><path d="M3.6 4 Q5.3 1.8 7 4Z" fill="#fff"/><path d="M1.1 15 Q3.5 9.5 8 10 Q12 10.6 14.7 14 L14.7 15Z" fill="#4caf39"/><path d="M6.8 16.2 L15.8 8.4" stroke="#f9f9f9" stroke-width="1.8"/></svg></span></td><td>10000.00</td><td>0.20</td><td>10</td><td>1</td><td><span class="ok"><span class="dot" style="background:#18bc9c"></span>领取成功</span></td><td>-</td><td>2023-01-15 10:03:51</td><td>无</td><td>243518275@qq.com</td></tr>
<tr><td><span class="cb"></span></td><td>12</td><td>20230116173124001908377948</td><td>190837</td><td>科沃斯扫地机器人T10 TURBO 智能全自动清洗 免洗尊享版</td><td>家电区</td><td>3000.00</td><td><span class="img"><svg class="abs" style="left:1px;top:1px" width="16" height="16" viewBox="0 0 16 16"><defs><linearGradient id="sky" x1="0" y1="0" x2="0" y2="1"><stop offset="0" stop-color="#d3e2f8"/><stop offset="1" stop-color="#aac6ee"/></linearGradient></defs><path d="M0.6 0.6 L10.3 0.6 L15.2 5.4 L15.2 15.4 L0.6 15.4Z" fill="url(#sky)" stroke="#8c8c8c" stroke-width="1.1"/><path d="M10.3 0.6 L10.3 5.4 L15.2 5.4Z" fill="#fff" stroke="#8c8c8c" stroke-width="1"/><ellipse cx="5.3" cy="4.4" rx="2.6" ry="1.1" fill="#fff"/><path d="M3.6 4 Q5.3 1.8 7 4Z" fill="#fff"/><path d="M1.1 15 Q3.5 9.5 8 10 Q12 10.6 14.7 14 L14.7 15Z" fill="#4caf39"/><path d="M6.8 16.2 L15.8 8.4" stroke="#f9f9f9" stroke-width="1.8"/></svg></span></td><td>3000.00</td><td>0.10</td><td>16</td><td>1</td><td><span class="ok"><span class="dot" style="background:#18bc9c"></span>领取成功</span></td><td>-</td><td>2023-01-16 17:31:24</td><td>无</td><td>刘建波888</td></tr>
<tr class="s"><td><span class="cb"></span></td><td>15</td><td>20230306165038001908453730</td><td>190845</td><td>8495191</td><td>奢品区</td><td>10888.00</td><td><span class="img"><svg class="abs" style="left:1px;top:1px" width="16" height="16" viewBox="0 0 16 16"><defs><linearGradient id="sky" x1="0" y1="0" x2="0" y2="1"><stop offset="0" stop-color="#d3e2f8"/><stop offset="1" stop-color="#aac6ee"/></linearGradient></defs><path d="M0.6 0.6 L10.3 0.6 L15.2 5.4 L15.2 15.4 L0.6 15.4Z" fill="url(#sky)" stroke="#8c8c8c" stroke-width="1.1"/><path d="M10.3 0.6 L10.3 5.4 L15.2 5.4Z" fill="#fff" stroke="#8c8c8c" stroke-width="1"/><ellipse cx="5.3" cy="4.4" rx="2.6" ry="1.1" fill="#fff"/><path d="M3.6 4 Q5.3 1.8 7 4Z" fill="#fff"/><path d="M1.1 15 Q3.5 9.5 8 10 Q12 10.6 14.7 14 L14.7 15Z" fill="#4caf39"/><path d="M6.8 16.2 L15.8 8.4" stroke="#f9f9f9" stroke-width="1.8"/></svg></span></td><td>10888.00</td><td>0.10</td><td>21</td><td>1</td><td><span><span class="dot" style="background:#2c3e50"></span>未领取</span></td><td>-</td><td>2023-03-06 16:50:38</td><td>无</td><td>a123456</td></tr>
<tr><td><span class="cb"></span></td><td>16</td><td>20230306165046001908452323</td><td>190845</td><td>Gucci Diana竹节小号鸵鸟皮</td><td>奢品区</td><td>50000.00</td><td><span class="img"><svg class="abs" style="left:1px;top:1px" width="16" height="16" viewBox="0 0 16 16"><defs><linearGradient id="sky" x1="0" y1="0" x2="0" y2="1"><stop offset="0" stop-color="#d3e2f8"/><stop offset="1" stop-color="#aac6ee"/></linearGradient></defs><path d="M0.6 0.6 L10.3 0.6 L15.2 5.4 L15.2 15.4 L0.6 15.4Z" fill="url(#sky)" stroke="#8c8c8c" stroke-width="1.1"/><path d="M10.3 0.6 L10.3 5.4 L15.2 5.4Z" fill="#fff" stroke="#8c8c8c" stroke-width="1"/><ellipse cx="5.3" cy="4.4" rx="2.6" ry="1.1" fill="#fff"/><path d="M3.6 4 Q5.3 1.8 7 4Z" fill="#fff"/><path d="M1.1 15 Q3.5 9.5 8 10 Q12 10.6 14.7 14 L14.7 15Z" fill="#4caf39"/><path d="M6.8 16.2 L15.8 8.4" stroke="#f9f9f9" stroke-width="1.8"/></svg></span></td><td>50000.00</td><td>0.10</td><td>21</td><td>1</td><td><span><span class="dot" style="background:#2c3e50"></span>未领取</span></td><td>-</td><td>2023-03-06 16:50:46</td><td>无</td><td>a123456</td></tr>
</table></div>
<div class="abs" style="left:260px;top:698px;width:1630px;height:18px;background:#f1f1f1"></div>
<div class="abs" style="left:277px;top:701px;width:1495px;height:13px;background:#c1c1c1"></div>
<svg class="abs" style="left:265px;top:703px" width="6" height="8" viewBox="0 0 6 8"><path d="M5 0 L0 4 L5 8Z" fill="#a3a3a3"/></svg>
<svg class="abs" style="left:1879px;top:703px" width="6" height="8" viewBox="0 0 6 8"><path d="M0 0 L5 4 L0 8Z" fill="#505050"/></svg>
<div class="abs" style="left:260px;top:734px;line-height:15px">显示第 1 到第 10 条记录，总共 10 条记录</div>
</body></html>
